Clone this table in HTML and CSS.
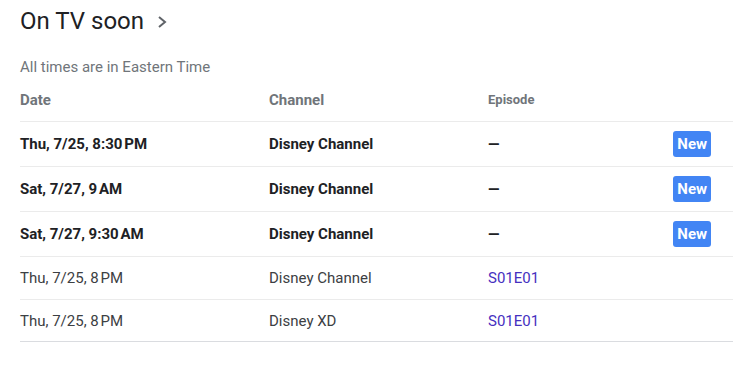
FILE: index.html
```html
<!DOCTYPE html>
<html lang="en">
<head>
<meta charset="utf-8">
<title>On TV soon</title>
<link rel="stylesheet" href="styles.css">
</head>
<body>
<div class="page">
  <h2 class="title">On TV soon <svg class="chev" width="12" height="14" viewBox="0 0 12 14"><polyline points="3,2 9,7 3,12" fill="none" stroke="#5f6368" stroke-width="2"/></svg></h2>
  <div class="note">All times are in Eastern Time</div>
  <div class="row head">
    <div class="h">Date</div>
    <div class="h">Channel</div>
    <div class="h small">Episode</div>
    <div></div>
  </div>
  <div class="row bold">
    <div>Thu, 7/25, 8:30&#8239;PM</div>
    <div>Disney Channel</div>
    <div>—</div>
    <div><span class="badge">New</span></div>
  </div>
  <div class="row bold">
    <div>Sat, 7/27, 9&#8239;AM</div>
    <div>Disney Channel</div>
    <div>—</div>
    <div><span class="badge">New</span></div>
  </div>
  <div class="row bold">
    <div>Sat, 7/27, 9:30&#8239;AM</div>
    <div>Disney Channel</div>
    <div>—</div>
    <div><span class="badge">New</span></div>
  </div>
  <div class="row">
    <div>Thu, 7/25, 8&#8239;PM</div>
    <div>Disney Channel</div>
    <div><a class="ep" href="#">S01E01</a></div>
    <div></div>
  </div>
  <div class="row last">
    <div>Thu, 7/25, 8&#8239;PM</div>
    <div>Disney XD</div>
    <div><a class="ep" href="#">S01E01</a></div>
    <div></div>
  </div>
</div>
</body>
</html>
```
FILE: styles.css
```css
html, body {
  margin: 0;
  background: #fff;
}
.page {
  padding: 7px 22px 0 20px;
  font-family: Roboto, "Liberation Sans", sans-serif;
  color: #3c4043;
}
.title {
  margin: 0;
  font-size: 24px;
  line-height: 28px;
  font-weight: 400;
  color: #202124;
  display: flex;
  align-items: center;
}
.chev {
  margin-left: 12px;
  margin-top: 2px;
}
.note {
  margin-top: 22px;
  font-size: 15px;
  line-height: 20px;
  color: #70757a;
}
.row {
  display: grid;
  grid-template-columns: 249px 219px 1fr auto;
  align-items: center;
  padding: 11px 22px 10.5px 0;
  border-top: 1px solid #ebebeb;
  font-size: 15px;
  line-height: 20px;
}
.row.head {
  border-top: none;
  margin-top: 13px;
  padding-top: 0;
  padding-bottom: 11px;
}
.h {
  font-size: 15px;
  font-weight: 700;
  color: #70757a;
}
.h.small {
  font-size: 13px;
}
.row.bold {
  font-weight: 700;
  color: #202124;
  padding-bottom: 11px;
}
.row.last {
  border-bottom: 1px solid #dadce0;
}
.badge {
  display: block;
  margin: -2px 0;
  padding: 3px 4px;
  background: #4285f4;
  color: #fff;
  border-radius: 3px;
  font-size: 15px;
  font-weight: 700;
}
.ep {
  color: #4630c0;
  text-decoration: none;
}
```
